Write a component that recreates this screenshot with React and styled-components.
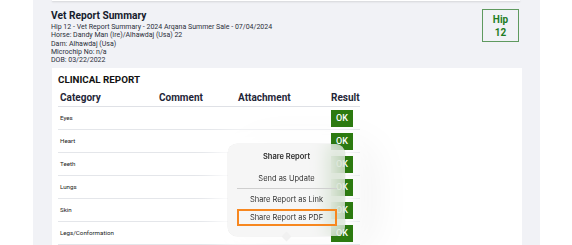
import React from "react";
import styled, { createGlobalStyle } from "styled-components";

const Global = createGlobalStyle`
  html, body { margin: 0; padding: 0; background: #ffffff; }
  body { font-family: Roboto, "Liberation Sans", Arial, sans-serif; color: #1c2333; }
  * { box-sizing: border-box; }
`;

const Stage = styled.div`
  position: relative;
  width: 572px;
  height: 245px;
  overflow: hidden;
  background: #ffffff;
`;

const Panel = styled.div`
  margin-left: 33px;
  width: 507px;
  height: 245px;
  background: #f1f2f6;
  display: flex;
  flex-direction: column;
  overflow: hidden;
`;

const TopCard = styled.div`
  flex-shrink: 0;
  margin: 0 20px 0 19px;
  height: 1px;
  background: #ffffff;
  box-shadow: 0 1px 2px rgba(0, 0, 0, 0.18);
`;

const Header = styled.div`
  flex-shrink: 0;
  display: flex;
  justify-content: space-between;
  align-items: flex-start;
  padding: 8px 21px 0 18px;
  height: 67px;
`;

const Info = styled.div`
  display: flex;
  flex-direction: column;
`;

const Title = styled.h1`
  margin: 0;
  font-size: 10.2px;
  line-height: 14px;
  font-weight: 700;
  color: #161c2d;
`;

const InfoLine = styled.div`
  font-size: 7px;
  line-height: 8.3px;
  color: #2a2f3a;
`;

const HipBox = styled.div`
  width: 37px;
  height: 33px;
  border: 1px solid #5f9a5f;
  display: flex;
  flex-direction: column;
  align-items: center;
  justify-content: center;
  color: #1f7d1f;
  font-weight: 700;
  font-size: 10px;
  line-height: 13px;
`;

const Card = styled.div`
  position: relative;
  flex-shrink: 0;
  margin: 0 18px 0 19px;
  height: 200px;
  background: #ffffff;
  padding: 5px 0 0 6px;
`;

const SectionTitle = styled.h2`
  margin: 0;
  font-size: 9.8px;
  line-height: 14px;
  font-weight: 700;
  color: #111111;
  text-transform: uppercase;
`;

const Table = styled.div`
  margin-top: 2px;
  width: 302px;
  display: grid;
  grid-template-columns: 101px 79px 93px 29px;
`;

const HeadCell = styled.div`
  height: 18px;
  padding-left: ${(p) => (p.$first ? "2px" : "0")};
  font-size: 10px;
  line-height: 18px;
  font-weight: 700;
  color: #1f2638;
  border-bottom: 1px solid #dfe1e6;
`;

const Cell = styled.div`
  height: 23px;
  display: flex;
  align-items: center;
  padding-left: ${(p) => (p.$first ? "2px" : "0")};
  font-size: 6.2px;
  color: #222;
  border-bottom: 1px solid #e4e6ea;
`;

const OkBadge = styled.div`
  position: relative;
  z-index: 2;
  width: 22px;
  height: 17px;
  background: #2c7a10;
  color: #ffffff;
  font-size: 9px;
  font-weight: 500;
  display: flex;
  align-items: center;
  justify-content: center;
`;

/* soft halo the popover casts on the table, under the result badges */
const Halo = styled.div`
  position: absolute;
  z-index: 1;
  left: 176px;
  top: 76px;
  width: 117px;
  height: 92px;
  border-radius: 12px;
  background: rgba(255, 255, 255, 0.95);
  box-shadow: 0 0 22px 14px rgba(255, 255, 255, 0.92), 24px 6px 40px 6px rgba(0, 0, 0, 0.05);
  pointer-events: none;
`;

const Popover = styled.div`
  position: absolute;
  z-index: 5;
  left: 228px;
  top: 144px;
  width: 117px;
  height: 92px;
  border-radius: 9px;
  background: rgba(242, 242, 242, 0.66);
  backdrop-filter: blur(10px);
  box-shadow: 0 0 0 0.5px rgba(0, 0, 0, 0.07);
  display: flex;
  flex-direction: column;
  align-items: center;
  font-family: Inter, "Noto Sans", sans-serif;
  color: #3a3a3a;
  &::after {
    content: "";
    position: absolute;
    left: 55px;
    bottom: -4px;
    width: 7px;
    height: 7px;
    background: #f1f1f1;
    transform: rotate(45deg);
  }
`;

const PopTitle = styled.div`
  margin-top: 8px;
  font-size: 7.5px;
  font-weight: 600;
  line-height: 10px;
  color: #2a2a2a;
`;

const PopItem = styled.div`
  width: 100px;
  height: ${(p) => p.$h}px;
  display: flex;
  align-items: center;
  justify-content: center;
  padding-top: ${(p) => p.$pt || 0}px;
  font-size: 7.5px;
  color: #333333;
  background: ${(p) => (p.$sep ? "#cfcfcf" : "transparent")};
  border: ${(p) => (p.$hl ? "2px solid #f7871f" : "none")};
`;

const rows = ["Eyes", "Heart", "Teeth", "Lungs", "Skin", "Legs/Conformation"];

export default function App() {
  return (
    <Stage>
      <Global />
      <Panel>
        <TopCard />
        <Header>
          <Info>
            <Title>Vet Report Summary</Title>
            <InfoLine>Hip 12 - Vet Report Summary - 2024 Arqana Summer Sale - 07/04/2024</InfoLine>
            <InfoLine>Horse: Dandy Man (Ire)/Alhawdaj (Usa) 22</InfoLine>
            <InfoLine>Dam: Alhawdaj (Usa)</InfoLine>
            <InfoLine>Microchip No: n/a</InfoLine>
            <InfoLine>DOB: 03/22/2022</InfoLine>
          </Info>
          <HipBox>
            <span>Hip</span>
            <span>12</span>
          </HipBox>
        </Header>
        <Card>
          <SectionTitle>Clinical Report</SectionTitle>
          <Table>
            <HeadCell $first>Category</HeadCell>
            <HeadCell>Comment</HeadCell>
            <HeadCell>Attachment</HeadCell>
            <HeadCell>Result</HeadCell>
            {rows.map((r) => (
              <React.Fragment key={r}>
                <Cell $first>{r}</Cell>
                <Cell />
                <Cell />
                <Cell>
                  <OkBadge>OK</OkBadge>
                </Cell>
              </React.Fragment>
            ))}
          </Table>
          <Halo />
        </Card>
      </Panel>
      <Popover>
        <PopTitle>Share Report</PopTitle>
        <PopItem $h={26} $pt={6}>Send as Update</PopItem>
        <PopItem $h={1} $sep />
        <PopItem $h={20}>Share Report as Link</PopItem>
        <PopItem $h={17} $hl>Share Report as PDF</PopItem>
      </Popover>
    </Stage>
  );
}
